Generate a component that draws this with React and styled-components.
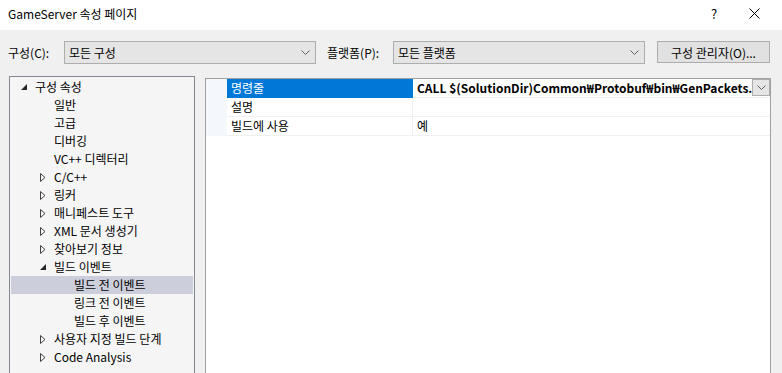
import React from "react";
import styled, { createGlobalStyle } from "styled-components";

const Global = createGlobalStyle`
  html, body { margin: 0; padding: 0; }
  body {
    background: #f0f0f0;
    font-family: "Noto Sans CJK KR", "Noto Sans", sans-serif;
    font-size: 12px;
    color: #000;
    overflow: hidden;
  }
`;

const Window = styled.div`
  width: 782px;
  height: 373px;
  display: flex;
  flex-direction: column;
  background: #f0f0f0;
  overflow: hidden;
`;

const TitleBar = styled.div`
  height: 30px;
  flex: none;
  background: #fff;
  display: flex;
  align-items: center;
  padding: 0 8px 0 8px;
  font-size: 12px;
`;

const Title = styled.div`
  flex: 1;
  margin-top: -3px;
`;

const TitleButton = styled.div`
  width: 40px;
  height: 30px;
  display: flex;
  align-items: center;
  justify-content: center;
  font-size: ${(p) => p.$size || 13}px;
  margin-top: -3px;
`;

const Toolbar = styled.div`
  height: 46px;
  flex: none;
  display: flex;
  align-items: flex-start;
  padding: 11px 12px 0 8px;
  box-sizing: border-box;
`;

const Label = styled.div`
  height: 23px;
  line-height: 23px;
  width: ${(p) => p.$w}px;
  margin-left: ${(p) => p.$ml || 0}px;
  flex: none;
`;

const Combo = styled.div`
  width: ${(p) => p.$w}px;
  height: 23px;
  box-sizing: border-box;
  border: 1px solid #adadad;
  background: #e5e5e5;
  display: flex;
  align-items: center;
  padding: 0 0 0 4px;
  flex: none;
`;

const ComboText = styled.div`
  flex: 1;
  margin-top: -1px;
`;

const Chevron = styled.svg`
  width: 9px;
  height: 5px;
  margin-right: ${(p) => p.$mr ?? 5}px;
`;

const Button = styled.div`
  width: 113px;
  height: 22px;
  box-sizing: border-box;
  border: 1px solid #adadad;
  background: #e1e1e1;
  margin-left: 12px;
  display: flex;
  align-items: center;
  justify-content: center;
  flex: none;
`;

const Body = styled.div`
  flex: 1;
  display: flex;
  padding: 0 11px 0 9px;
  gap: 10px;
  min-height: 0;
`;

const Tree = styled.div`
  width: 186px;
  flex: none;
  box-sizing: border-box;
  border: 1px solid #828790;
  border-bottom: none;
  background: #f5f5f5;
  padding: 1px 1px 0 1px;
  height: 320px;
`;

const TreeRow = styled.div`
  height: 18px;
  display: flex;
  align-items: center;
  padding-left: ${(p) => p.$indent}px;
  background: ${(p) => (p.$selected ? "#cccedb" : "transparent")};
  white-space: nowrap;
`;

const Expander = styled.div`
  width: 14px;
  flex: none;
  display: flex;
  align-items: center;
`;

const RowText = styled.span`
  margin-top: -1px;
`;

const GridPanel = styled.div`
  flex: 1;
  min-width: 0;
  margin-top: 2px;
  box-sizing: border-box;
  border: 1px solid #a0a0a0;
  border-bottom: none;
  background: #fff;
  height: 320px;
  overflow: hidden;
`;

const PropRow = styled.div`
  display: flex;
  height: 19px;
`;

const Gutter = styled.div`
  width: 21px;
  flex: none;
  background: #f4f7fc;
`;

const NameCell = styled.div`
  width: 186px;
  flex: none;
  box-sizing: border-box;
  padding-left: 4px;
  line-height: 17px;
  border-bottom: 1px solid #f0f0f0;
  border-right: 1px solid #f0f0f0;
  background: ${(p) => (p.$selected ? "#0078d7" : "#fff")};
  color: ${(p) => (p.$selected ? "#fff" : "#000")};
  border-color: ${(p) => (p.$selected ? "#0078d7" : "#f0f0f0")};
`;

const ValueCell = styled.div`
  flex: 1;
  min-width: 0;
  display: flex;
  align-items: center;
  box-sizing: border-box;
  padding-left: 4px;
  border-bottom: 1px solid #f0f0f0;
  font-weight: ${(p) => (p.$bold ? 700 : 400)};
`;

const ValueText = styled.div`
  flex: 1;
  min-width: 0;
  overflow: hidden;
  white-space: nowrap;
  line-height: 17px;
  margin-top: -1px;
`;

const DropButton = styled.div`
  width: 18px;
  height: 17px;
  flex: none;
  box-sizing: border-box;
  border: 1px solid #adadad;
  background: #e5e5e5;
  display: flex;
  align-items: center;
  justify-content: center;
  margin-top: -1px;
`;

const ChevronIcon = ({ mr }) => (
  <Chevron viewBox="0 0 9 5" $mr={mr}>
    <path d="M0.5 0.5 L4.5 4.5 L8.5 0.5" fill="none" stroke="#606060" strokeWidth="1" />
  </Chevron>
);

const Expanded = () => (
  <svg width="6" height="6" viewBox="0 0 6 6">
    <path d="M6 0 L6 6 L0 6 Z" fill="#262626" />
  </svg>
);

const Collapsed = () => (
  <svg width="6" height="9" viewBox="0 0 6 9">
    <path d="M0.5 0.5 L5 4.5 L0.5 8.5 Z" fill="none" stroke="#404040" strokeWidth="1" />
  </svg>
);

const treeItems = [
  { label: "구성 속성", level: 0, state: "open" },
  { label: "일반", level: 1 },
  { label: "고급", level: 1 },
  { label: "디버깅", level: 1 },
  { label: "VC++ 디렉터리", level: 1 },
  { label: "C/C++", level: 1, state: "closed" },
  { label: "링커", level: 1, state: "closed" },
  { label: "매니페스트 도구", level: 1, state: "closed" },
  { label: "XML 문서 생성기", level: 1, state: "closed" },
  { label: "찾아보기 정보", level: 1, state: "closed" },
  { label: "빌드 이벤트", level: 1, state: "open" },
  { label: "빌드 전 이벤트", level: 2, selected: true },
  { label: "링크 전 이벤트", level: 2 },
  { label: "빌드 후 이벤트", level: 2 },
  { label: "사용자 지정 빌드 단계", level: 1, state: "closed" },
  { label: "Code Analysis", level: 1, state: "closed" },
];

const props = [
  { name: "명령줄", value: "CALL $(SolutionDir)Common₩Protobuf₩bin₩GenPackets.bat", selected: true, bold: true },
  { name: "설명", value: "" },
  { name: "빌드에 사용", value: "예" },
];

export default function App() {
  return (
    <>
      <Global />
      <Window>
        <TitleBar>
          <Title>GameServer 속성 페이지</Title>
          <TitleButton $size={13}>?</TitleButton>
          <TitleButton>
            <svg width="11" height="11" viewBox="0 0 11 11">
              <path d="M0.5 0.5 L10.5 10.5 M10.5 0.5 L0.5 10.5" stroke="#000" strokeWidth="1" />
            </svg>
          </TitleButton>
        </TitleBar>
        <Toolbar>
          <Label $w={56}>구성(C):</Label>
          <Combo $w={252}>
            <ComboText>모든 구성</ComboText>
            <ChevronIcon />
          </Combo>
          <Label $w={66} $ml={11}>플랫폼(P):</Label>
          <Combo $w={252}>
            <ComboText>모든 플랫폼</ComboText>
            <ChevronIcon />
          </Combo>
          <Button>구성 관리자(O)...</Button>
        </Toolbar>
        <Body>
          <Tree>
            {treeItems.map((it, i) => {
              const base = it.level === 0 ? 10 : it.level === 1 ? 29 : 63;
              return (
                <TreeRow key={i} $indent={it.state || it.level === 0 ? base : base + (it.level === 1 ? 14 : 0)} $selected={it.selected}>
                  {it.state && (
                    <Expander>{it.state === "open" ? <Expanded /> : <Collapsed />}</Expander>
                  )}
                  <RowText>{it.label}</RowText>
                </TreeRow>
              );
            })}
          </Tree>
          <GridPanel>
            {props.map((p, i) => (
              <PropRow key={i}>
                <Gutter />
                <NameCell $selected={p.selected}>{p.name}</NameCell>
                <ValueCell $bold={p.bold}>
                  <ValueText>{p.value}</ValueText>
                  {p.selected && (
                    <DropButton>
                      <ChevronIcon mr={0} />
                    </DropButton>
                  )}
                </ValueCell>
              </PropRow>
            ))}
          </GridPanel>
        </Body>
      </Window>
    </>
  );
}
